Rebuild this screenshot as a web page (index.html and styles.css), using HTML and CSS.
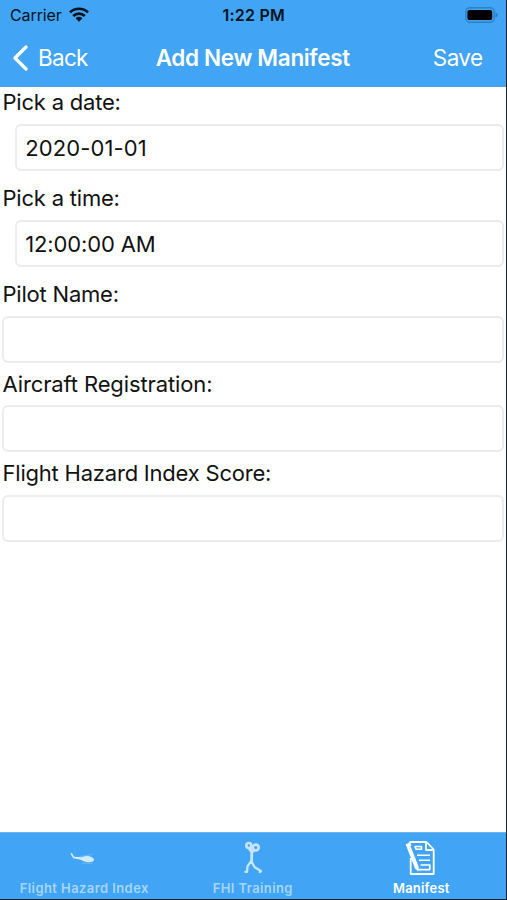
FILE: index.html
```html
<!DOCTYPE html>
<html lang="en">
<head>
<meta charset="utf-8">
<title>Add New Manifest</title>
<link rel="stylesheet" href="styles.css">
</head>
<body>
<div class="screen">
  <header class="header">
    <div class="status">
      <div class="carrier"><span class="carrier-name">Carrier</span>
        <svg class="wifi" viewBox="0 0 20 15"><g fill="none" stroke="#06121d" stroke-width="2.7"><path d="M1 5.4C6 .5 14 .5 19 5.4"/><path d="M4.2 9C7.6 5.7 12.4 5.7 15.8 9"/></g><path fill="#06121d" d="M6.6 11.3Q10 8.4 13.4 11.3L10 14.8Z"/></svg>
      </div>
      <span class="clock">1:22 PM</span>
      <svg class="battery" viewBox="0 0 33 16"><rect x=".8" y=".8" width="28.4" height="14.4" rx="4" fill="none" stroke="#2f80c2" stroke-width="1.4"/><rect x="2.4" y="2.9" width="24.8" height="10.2" rx="2.2" fill="#000"/><path d="M30.6 5.5Q32.4 6.3 32.4 8T30.6 10.5Z" fill="#2b74b0"/></svg>
    </div>
    <nav class="nav">
      <div class="back"><svg class="chevron" viewBox="0 0 16 26"><path d="M14 2L3 13L14 24" fill="none" stroke="#fff" stroke-width="3.2" stroke-linecap="round" stroke-linejoin="round"/></svg><span class="back-text">Back</span></div>
      <h1 class="title">Add New Manifest</h1>
      <span class="save">Save</span>
    </nav>
  </header>
  <main class="form">
    <section class="field picker"><div class="label">Pick a date:</div><div class="input date">2020-01-01</div></section>
    <section class="field picker"><div class="label">Pick a time:</div><div class="input time">12:00:00 AM</div></section>
    <section class="field"><div class="label">Pilot Name:</div><div class="input"></div></section>
    <section class="field"><div class="label wide">Aircraft Registration:</div><div class="input"></div></section>
    <section class="field"><div class="label">Flight Hazard Index Score:</div><div class="input"></div></section>
  </main>
  <footer class="tabs">
    <div class="tab">
      <svg class="icon" viewBox="0 0 40 40"><path fill="#d3ebff" d="M6.2 15.2L8 15.2L10.2 18.7L18 19.3Q21 17.7 25.5 18.2Q29.7 19.3 30.3 22.3Q28 24.7 22.5 24Q18.5 23.3 16.8 21.7L9.2 20.2Z"/><path d="M15 18.8L28.5 16.4M18 25.2H29" stroke="#d3ebff" stroke-width=".6" opacity=".5"/></svg>
      <span class="tab-text t-index">Flight Hazard Index</span>
    </div>
    <div class="tab">
      <svg class="icon" viewBox="0 0 40 40"><g fill="none" stroke="#c7e5ff" stroke-linecap="round" stroke-linejoin="round"><circle cx="15.8" cy="7.5" r="2.5" stroke-width="2.6"/><circle cx="22.8" cy="9.5" r="2.9" stroke-width="2.6"/><path d="M16.5 11L18.8 14.3L20.5 12.5M18.9 10.5L18.6 24" stroke-width="2.8"/><path d="M18.3 23L14.5 28.3L14 33.8H12.4M18.8 24L21.7 29.3L28 33L26.8 34" stroke-width="2.3"/></g></svg>
      <span class="tab-text t-training">FHI Training</span>
    </div>
    <div class="tab active">
      <svg class="icon" viewBox="0 0 40 40"><g fill="none" stroke="#fff" stroke-width="1.8" stroke-linejoin="round"><path d="M8.5 4H25.5L32.7 11.5V36H9.7V20M8.5 4L9.5 8"/><path d="M25 4V12H32.7"/><path d="M14 8.5H20.5V11.3H15Z" stroke-width="1.6"/><path d="M16 17.2H29M18 22.2H29M19.5 27H28.8V31.6H16.5" stroke-width="1.6"/></g><path d="M4.6 6.3L8.2 5L17.8 29L17.2 33.5L14 30.5Z" fill="#fff"/></svg>
      <span class="tab-text t-manifest">Manifest</span>
    </div>
  </footer>
</div>
</body>
</html>
```
FILE: styles.css
```css
* { box-sizing: border-box; }
html, body { margin: 0; height: 100%; }
body { background: #17202a; font-family: Inter, "Liberation Sans", sans-serif; color: #111; overflow: hidden; }
.screen { width: 505.5px; height: 898.5px; background: #fff; display: flex; flex-direction: column; white-space: nowrap; }
.header { height: 87px; flex: none; background: #41a4f4; }
.status { height: 30px; display: grid; grid-template-columns: 1fr auto 1fr; align-items: center; padding: 0 8px 0 10px; color: #06121d; }
.carrier { display: flex; align-items: center; gap: 7px; font-size: 16px; letter-spacing: -.1px; }
.wifi { width: 20px; height: 15px; margin-top: -2px; }
.clock { font-size: 16px; font-weight: 600; letter-spacing: .2px; }
.battery { width: 33px; height: 16px; justify-self: end; margin-top: -1px; }
.nav { height: 57px; display: grid; grid-template-columns: 1fr auto 1fr; align-items: center; padding: 0 12px 2px; color: #fff; font-size: 22.5px; }
.back { display: flex; align-items: center; gap: 10px; letter-spacing: -.7px; }
.chevron { width: 16px; height: 26px; }
.title { margin: 0; font-size: 22.5px; font-weight: 600; letter-spacing: -.33px; }
.save { justify-self: end; margin-right: 11px; letter-spacing: -.6px; }
.form { flex: 1; padding: 0 2px; font-size: 22px; }
.field { height: 89.5px; }
.picker { height: 96.2px; }
.label { height: 36.5px; line-height: 30px; padding-left: .5px; letter-spacing: -.21px; }
.wide { letter-spacing: -.12px; }
.input { height: 47px; border: 2px solid #ececec; border-radius: 6px; padding-left: 8px; line-height: 44px; }
.picker .input { margin-left: 13.3px; }
.date { letter-spacing: .1px; }
.time { letter-spacing: -.15px; }
.tabs { height: 66.5px; flex: none; background: #41a4f4; display: grid; grid-template-columns: repeat(3, 1fr); border-top: 1px solid #6bb2ee; }
.tab { display: flex; flex-direction: column; align-items: center; color: #a5d5fc; font-size: 13px; font-weight: 600; padding-top: 5px; }
.active { color: #fff; }
.icon { width: 40px; height: 40px; flex: none; }
.tab-text { line-height: 20px; }
.t-index { letter-spacing: .42px; }
.t-training { letter-spacing: .4px; }
.t-manifest { letter-spacing: .2px; }
```
